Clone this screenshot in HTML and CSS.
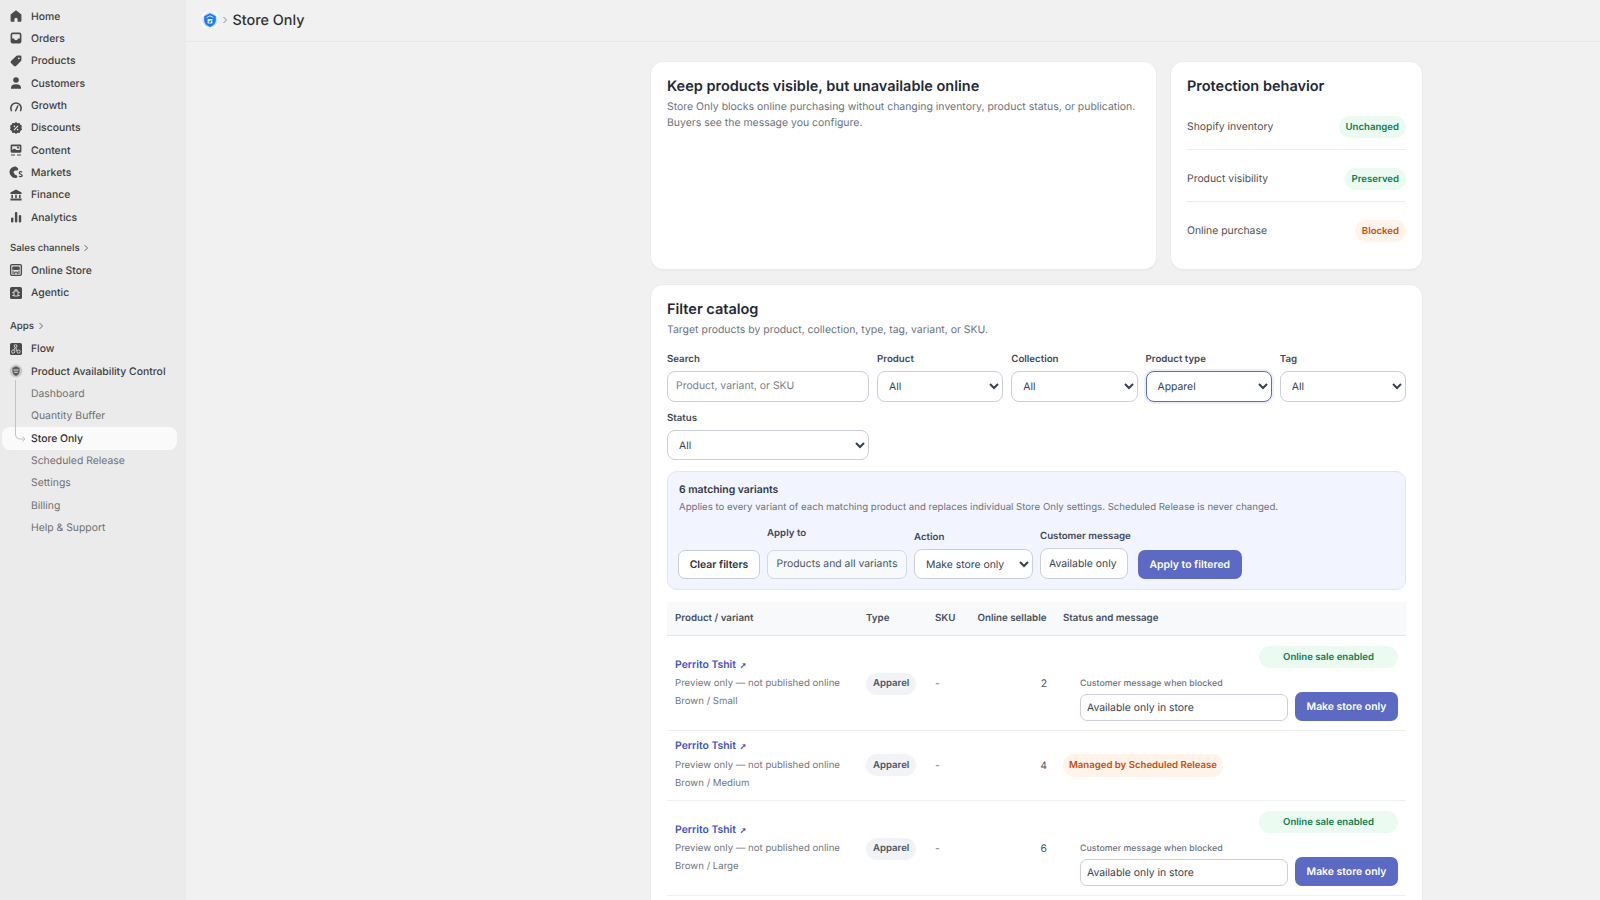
FILE: index.html
```html
<!DOCTYPE html>
<html lang="en">
<head>
<meta charset="utf-8">
<title>Store Only</title>
<link rel="stylesheet" href="styles.css">
</head>
<body>
<div class="app">
  <nav class="sidebar">
    <ul class="nav-list">
      <li class="nav-item"><svg class="ico" viewBox="0 0 16 16"><path d="M8 2.2 13.4 6.6V12.8A1 1 0 0 1 12.4 13.8H9.6V11.4A1.6 1.6 0 0 0 6.4 11.4V13.8H3.6A1 1 0 0 1 2.6 12.8V6.6Z"/></svg>Home</li>
      <li class="nav-item"><svg class="ico" viewBox="0 0 16 16"><path fill-rule="evenodd" d="M4.6 2.6H11.4A2 2 0 0 1 13.4 4.6V11.4A2 2 0 0 1 11.4 13.4H4.6A2 2 0 0 1 2.6 11.4V4.6A2 2 0 0 1 4.6 2.6ZM4.2 4.2V8.4H6.2A1.8 1.8 0 0 0 9.8 8.4H11.8V4.2Z"/></svg>Orders</li>
      <li class="nav-item"><svg class="ico" viewBox="0 0 16 16"><path fill-rule="evenodd" d="M9.2 2.6H12.4A1 1 0 0 1 13.4 3.6V7A1.2 1.2 0 0 1 13 7.9L8 13A1.5 1.5 0 0 1 6 13L3 10A1.5 1.5 0 0 1 3 8L8.3 3A1.2 1.2 0 0 1 9.2 2.6ZM10.8 4.4A.9.9 0 1 0 10.9 6.2.9.9 0 0 0 10.8 4.4Z"/></svg>Products</li>
      <li class="nav-item"><svg class="ico" viewBox="0 0 16 16"><circle cx="8" cy="5" r="2.8"/><path d="M3 13.8V12.6C3 10.4 5 9.2 8 9.2S13 10.4 13 12.6V13.8Z"/></svg>Customers</li>
      <li class="nav-item"><svg class="ico" viewBox="0 0 16 16"><path class="stk" d="M3.4 13.6A5.2 5.2 0 1 1 12.6 13.6M7.6 13.8 9.8 9"/></svg>Growth</li>
      <li class="nav-item"><svg class="ico" viewBox="0 0 16 16"><path d="M8 2 9.6 3.2 11.6 2.9 12.3 4.7 14 5.8 13.4 7.8 14 9.8 12.3 10.9 11.6 12.9 9.6 12.8 8 14 6.4 12.8 4.4 12.9 3.7 10.9 2 9.8 2.6 7.8 2 5.8 3.7 4.7 4.4 2.9 6.4 3.2Z"/><path class="cut" d="M6.2 9.8 9.8 6.2"/><circle class="dot" cx="6.4" cy="6.4" r=".8"/><circle class="dot" cx="9.6" cy="9.6" r=".8"/></svg>Discounts</li>
      <li class="nav-item"><svg class="ico" viewBox="0 0 16 16"><path fill-rule="evenodd" d="M4 2.6H12A1.4 1.4 0 0 1 13.4 4V9.4A1.4 1.4 0 0 1 12 10.8H4A1.4 1.4 0 0 1 2.6 9.4V4A1.4 1.4 0 0 1 4 2.6ZM4.2 4.2V8L6.4 6.6 8.4 8 11.8 8V4.2Z"/><circle cx="10" cy="5.6" r="1.1"/><path d="M3 12.4H7V13.6H3ZM9 12.4H13V13.6H9Z"/></svg>Content</li>
      <li class="nav-item"><svg class="ico" viewBox="0 0 16 16"><path d="M7.6 2.4A5.8 5.8 0 1 0 9.4 13.6L9 11.6 7 10.8 5.4 8 7 6.4 9.4 6.6 10.4 5A5.8 5.8 0 0 0 7.6 2.4Z"/><path class="sym" d="M14 8.4C13.4 7.4 11.2 7.4 11.2 8.9 11.2 10.4 14.2 10 14.2 11.6 14.2 13 11.8 13 11 12"/></svg>Markets</li>
      <li class="nav-item"><svg class="ico" viewBox="0 0 16 16"><path d="M8 2.4 13.6 5.4V7H2.4V5.4Z"/><path d="M3.4 7.8H5V11H3.4ZM7.2 7.8H8.8V11H7.2ZM11 7.8H12.6V11H11ZM2.4 11.6H13.6V13.6H2.4Z"/></svg>Finance</li>
      <li class="nav-item"><svg class="ico" viewBox="0 0 16 16"><rect x="3" y="8.4" width="2.4" height="5.2" rx="1"/><rect x="6.9" y="3" width="2.4" height="10.6" rx="1"/><rect x="10.8" y="6" width="2.4" height="7.6" rx="1"/></svg>Analytics</li>
    </ul>
    <div class="nav-heading nav-heading-sales">Sales channels <svg class="chev" viewBox="0 0 6 8"><path d="M1.5 1 4.5 4 1.5 7"/></svg></div>
    <ul class="nav-list">
      <li class="nav-item"><svg class="ico" viewBox="0 0 16 16"><rect class="box" x="2.6" y="2.6" width="10.8" height="10.8" rx="1.4"/><path d="M4.8 4.4H11.2L12 6.8C12 8 10.6 8.2 10 7.4 9.4 8.2 6.6 8.2 6 7.4 5.4 8.2 4 8 4 6.8Z"/><path class="thin" d="M5 8.6V12.2M11 8.6V12.2M6.6 12.2V10.2H9.4V12.2"/></svg>Online Store</li>
      <li class="nav-item"><svg class="ico" viewBox="0 0 16 16"><rect x="2" y="2" width="12" height="12" rx="1.6"/><path class="lt" d="M6 6H10V11H6ZM7.2 6V4M8.8 6V4M6 7.6H4.2M10 7.6H11.8M6 10.6H4.2M10 10.6H11.8"/></svg>Agentic</li>
    </ul>
    <div class="nav-heading nav-heading-apps">Apps <svg class="chev" viewBox="0 0 6 8"><path d="M1.5 1 4.5 4 1.5 7"/></svg></div>
    <ul class="nav-list">
      <li class="nav-item"><svg class="ico" viewBox="0 0 16 16"><rect x="2" y="2" width="12" height="12" rx="1.6"/><path class="lt" d="M7.4 6.4 5.8 9M8.2 6.6V9.2L9.4 9.8"/><circle class="lt" cx="7.6" cy="5" r="1.4"/><circle class="lt" cx="5.2" cy="10.6" r="1.6"/><circle class="lt" cx="10.6" cy="10.6" r="1.6"/></svg>Flow</li>
      <li class="nav-item nav-item-app"><svg class="ico" viewBox="0 0 16 16"><circle class="app-disc" cx="8" cy="8" r="6.4"/><path d="M8 3.2 11.6 5V8.6C11.6 10.8 10 12.2 8 13 6 12.2 4.4 10.8 4.4 8.6V5Z"/><path class="cut" d="M5.8 7H10.2M6.4 9.2H9.6"/></svg>Product Availability Control</li>
      <li class="nav-item nav-sub">Dashboard</li>
      <li class="nav-item nav-sub">Quantity Buffer</li>
      <li class="nav-item nav-sub nav-current">Store Only<svg class="tree" viewBox="0 0 15 62" aria-hidden="true"><path d="M.5 0V54Q.5 59 5.5 59H10M7.5 56.5 10 59 7.5 61.5"/></svg></li>
      <li class="nav-item nav-sub">Scheduled Release</li>
      <li class="nav-item nav-sub">Settings</li>
      <li class="nav-item nav-sub">Billing</li>
      <li class="nav-item nav-sub">Help &amp; Support</li>
    </ul>
  </nav>

  <div class="page">
    <header class="topbar">
      <span class="logo"><svg viewBox="0 0 16 16" class="logo-svg"><circle cx="8" cy="8" r="7.8" fill="#cfe3ff"/><path d="M8 1.2 13.8 4.2V8.6C13.8 11.6 11.2 13.8 8 15 4.8 13.8 2.2 11.6 2.2 8.6V4.2Z" fill="#1f78f2"/><path d="M4.6 5.6 8 3.8 11.4 5.6" fill="none" stroke="#d7e8ff" stroke-width="1"/><rect x="5.6" y="7" width="4.8" height="4.6" rx=".6" fill="#dff4ea"/><path d="M6.8 9.4 7.8 10.4 9.4 8.2" fill="none" stroke="#16a05a" stroke-width="1.1"/></svg></span>
      <svg class="crumb-sep" viewBox="0 0 6 8"><path d="M1.5 1 4.5 4 1.5 7"/></svg>
      <h1 class="page-title">Store Only</h1>
    </header>

    <main class="content">
      <div class="top-cards">
        <section class="card">
          <h2 class="card-title">Keep products visible, but unavailable online</h2>
          <p class="card-text">Store Only blocks online purchasing without changing inventory, product status, or publication. Buyers see the message you configure.</p>
        </section>
        <section class="card">
          <h2 class="card-title">Protection behavior</h2>
          <div class="behavior">
            <div class="behavior-row"><span class="behavior-name">Shopify inventory</span><span class="badge badge-green">Unchanged</span></div>
            <div class="behavior-row"><span class="behavior-name">Product visibility</span><span class="badge badge-green">Preserved</span></div>
            <div class="behavior-row behavior-last"><span class="behavior-name">Online purchase</span><span class="badge badge-orange">Blocked</span></div>
          </div>
        </section>
      </div>

      <section class="card card-catalog">
        <h2 class="card-title">Filter catalog</h2>
        <p class="card-text">Target products by product, collection, type, tag, variant, or SKU.</p>

        <div class="filters">
          <label class="field"><span class="field-label">Search</span><input class="control" type="text" placeholder="Product, variant, or SKU"></label>
          <label class="field"><span class="field-label">Product</span><select class="control"><option>All</option></select></label>
          <label class="field"><span class="field-label">Collection</span><select class="control"><option>All</option></select></label>
          <label class="field"><span class="field-label">Product type</span><select class="control control-focus"><option>Apparel</option></select></label>
          <label class="field"><span class="field-label">Tag</span><select class="control"><option>All</option></select></label>
          <label class="field"><span class="field-label">Status</span><select class="control control-short"><option>All</option></select></label>
        </div>

        <div class="bulk">
          <div class="bulk-title">6 matching variants</div>
          <div class="bulk-text">Applies to every variant of each matching product and replaces individual Store Only settings. Scheduled Release is never changed.</div>
          <div class="bulk-controls">
            <button class="btn btn-plain" type="button">Clear filters</button>
            <div class="bulk-field bulk-apply"><span class="field-label">Apply to</span><div class="static-box">Products and all variants</div></div>
            <label class="bulk-field bulk-action"><span class="field-label">Action</span><select class="control control-action"><option>Make store only</option></select></label>
            <label class="bulk-field bulk-message"><span class="field-label">Customer message</span><input class="control control-message" type="text" value="Available only"></label>
            <button class="btn btn-primary btn-apply" type="button">Apply to filtered</button>
          </div>
        </div>

        <table class="variants">
          <thead>
            <tr>
              <th class="col-product">Product / variant</th>
              <th class="col-type">Type</th>
              <th class="col-sku">SKU</th>
              <th class="col-qty">Online sellable</th>
              <th class="col-status">Status and message</th>
            </tr>
          </thead>
          <tbody>
            <tr class="row-tall">
              <td><a class="product-link" href="#">Perrito Tshit <span class="ext">➚</span></a><div class="meta">Preview only — not published online</div><div class="meta">Brown / Small</div></td>
              <td><span class="pill">Apparel</span></td>
              <td class="sku">-</td>
              <td class="qty">2</td>
              <td>
                <div class="status-stack">
                  <span class="badge badge-green badge-wide">Online sale enabled</span>
                  <div class="msg-form">
                    <label class="msg-field"><span class="msg-label">Customer message when blocked</span><input class="msg-input" type="text" value="Available only in store"></label>
                    <button class="btn btn-primary btn-make" type="button">Make store only</button>
                  </div>
                </div>
              </td>
            </tr>
            <tr class="row-short">
              <td><a class="product-link" href="#">Perrito Tshit <span class="ext">➚</span></a><div class="meta">Preview only — not published online</div><div class="meta">Brown / Medium</div></td>
              <td><span class="pill">Apparel</span></td>
              <td class="sku">-</td>
              <td class="qty">4</td>
              <td><span class="badge badge-orange badge-managed">Managed by Scheduled Release</span></td>
            </tr>
            <tr class="row-tall">
              <td><a class="product-link" href="#">Perrito Tshit <span class="ext">➚</span></a><div class="meta">Preview only — not published online</div><div class="meta">Brown / Large</div></td>
              <td><span class="pill">Apparel</span></td>
              <td class="sku">-</td>
              <td class="qty">6</td>
              <td>
                <div class="status-stack">
                  <span class="badge badge-green badge-wide">Online sale enabled</span>
                  <div class="msg-form">
                    <label class="msg-field"><span class="msg-label">Customer message when blocked</span><input class="msg-input" type="text" value="Available only in store"></label>
                    <button class="btn btn-primary btn-make" type="button">Make store only</button>
                  </div>
                </div>
              </td>
            </tr>
          </tbody>
        </table>
      </section>
    </main>
  </div>
</div>
</body>
</html>
```
FILE: styles.css
```css
* { box-sizing: border-box; }
html, body { margin: 0; height: 900px; overflow: hidden; }
body { font-family: Inter, "Liberation Sans", sans-serif; font-size: 10.4px; color: #303030; background: #f1f1f1; text-rendering: geometricPrecision; }
input, select, button { text-rendering: geometricPrecision; }
h1, h2, p, ul { margin: 0; padding: 0; }
ul { list-style: none; }

.app { display: flex; height: 900px; }

.sidebar { width: 186px; flex: none; background: #ebebeb; padding-top: 5px; }
.nav-item { position: relative; display: flex; align-items: center; height: 22.35px; padding-left: 31px; font-size: 10.4px; font-weight: 500; color: #3d3d3d; white-space: nowrap; }
.ico { position: absolute; left: 8px; top: 3px; width: 16px; height: 16px; fill: #4a4a4a; }
.stk { fill: none; stroke: #4a4a4a; stroke-width: 1.5; stroke-linecap: round; }
.cut { fill: none; stroke: #ebebeb; stroke-width: 1.1; stroke-linecap: round; }
.dot { fill: #ebebeb; }
.sym { fill: none; stroke: #4a4a4a; stroke-width: 1.2; }
.box { fill: #dcdcdc; stroke: #4a4a4a; stroke-width: 1.3; }
.thin { fill: none; stroke: #4a4a4a; stroke-width: 1; }
.lt { fill: none; stroke: #dedede; stroke-width: .9; }
.app-disc { fill: #c9c9c9; }
.nav-item-app .ico path { fill: #5a5a5a; }
.nav-item-app .ico .cut { fill: none; stroke: #d8d8d8; }
.nav-heading { display: flex; align-items: center; gap: 3.5px; height: 22.35px; padding-left: 10px; font-size: 9.7px; font-weight: 500; color: #3d3d3d; }
.nav-heading-sales { margin-top: 8.7px; }
.nav-heading-apps { margin-top: 11.1px; }
.chev { width: 6px; height: 8px; fill: none; stroke: #666; stroke-width: 1; }
.nav-sub { color: #707070; font-weight: 400; }
.nav-current { color: #303030; font-weight: 500; isolation: isolate; }
.nav-current::before { content: ""; position: absolute; left: 2px; right: 9px; top: 0; bottom: -1px; background: #fafafa; border-radius: 8px; z-index: -1; }
.tree { position: absolute; left: 15px; top: -47px; width: 15px; height: 62px; fill: none; stroke: #c2c2c2; stroke-width: 1; overflow: visible; }

.page { flex: 1; min-width: 0; }
.topbar { display: flex; align-items: center; height: 42px; padding: 0 0 1px 16px; border-bottom: 1px solid #e8e8e8; }
.logo { display: block; width: 16px; height: 16px; background: #fff; border-radius: 4px; }
.logo-svg { display: block; width: 16px; height: 16px; }
.crumb-sep { width: 6px; height: 8px; margin: 0 4.4px 0 4px; fill: none; stroke: #888; stroke-width: 1; }
.page-title { font-size: 14.4px; font-weight: 500; color: #303030; }

.content { width: 773px; margin-left: 464px; padding-top: 19px; }
.top-cards { display: grid; grid-template-columns: 507px 253px; gap: 13px; margin-bottom: 14px; }
.card { height: 209px; padding: 15px 16px 16px; background: #fff; border: 1px solid #ececec; border-radius: 13px; box-shadow: 0 1px 1px rgba(0, 0, 0, .03); }
.card-catalog { height: auto; padding-bottom: 16px; }
.card-title { font-size: 14.5px; line-height: 20px; font-weight: 600; color: #1f2937; }
.card-text { margin-top: 2px; font-size: 10.46px; line-height: 16px; color: #6b7280; }

.behavior { margin-top: 1px; }
.behavior-row { display: flex; justify-content: space-between; align-items: center; padding: 18px 0 11px; border-bottom: 1px solid #ececef; font-size: 10.4px; color: #4f4f4f; }
.behavior-name { margin-bottom: 2px; }
.behavior-last { border-bottom: 0; }

.badge { display: inline-flex; align-items: center; justify-content: center; height: 22px; padding: 0 7px; border-radius: 11px; font-size: 9.6px; font-weight: 600; white-space: nowrap; }
.badge-green { background: #ebfbf1; color: #0f7b4f; }
.badge-orange { background: #fff3ea; color: #c2500f; }
.badge-wide { width: 139px; }
.badge-managed { height: 23px; padding: 0 6px; }

.filters { display: grid; grid-template-columns: 1.6fr 1fr 1fr 1fr 1fr; gap: 10px 8px; margin-top: 15px; }
.field { display: flex; flex-direction: column; min-width: 0; }
.field-label { display: block; margin-bottom: 4px; font-size: 9.7px; line-height: 14px; font-weight: 600; color: #3f4757; white-space: nowrap; }
.control { width: 100%; height: 31px; padding: 0 8px; background: #fff; border: 1px solid #ccced8; border-radius: 8px; font-family: inherit; font-size: 10.4px; color: #374151; }
select.control { padding: 0 7px; }
input.control { padding-bottom: 2px; }
.control::placeholder { color: #7a7f8a; }
.control-short { height: 30px; }
.control-focus { border-color: #5c6ac4; box-shadow: 0 0 0 2px #eceefb; }

.bulk { margin-top: 11px; padding: 10px; background: #f2f5ff; border: 1px solid #dfe5fb; border-radius: 10px; }
.bulk-title { margin: 0 0 0 1px; font-size: 10.4px; line-height: 16px; font-weight: 600; color: #2f3745; }
.bulk-text { margin: 2px 0 0 1px; font-size: 9.65px; line-height: 16px; color: #6b7280; }
.bulk-controls { display: flex; align-items: flex-end; gap: 7px; margin-top: 11px; }
.bulk-field { display: flex; flex-direction: column; align-items: flex-start; }
.bulk-apply .field-label { margin-bottom: 9px; }
.bulk-action .field-label, .bulk-message .field-label { margin-bottom: 4.5px; }
.static-box { display: flex; align-items: center; justify-content: center; width: 140px; height: 29px; padding-bottom: 2px; background: #f8f9fb; border: 1px solid #d4d7e0; border-radius: 7px; font-size: 10.4px; color: #4b5563; }
.control-action { width: 119px; height: 30px; }
input.control-message { width: 88px; height: 31px; padding-bottom: 0; }

.btn { height: 29px; border-radius: 7px; font-family: inherit; font-size: 10.4px; font-weight: 600; white-space: nowrap; cursor: pointer; }
.btn-plain { width: 82px; padding: 0; background: #fff; border: 1px solid #c9ccd6; color: #2b3240; }
.btn-primary { padding: 0; background: #5c6ac4; border: 0; color: #fff; }
.btn-apply { width: 104px; }
.btn-make { width: 103px; }

.variants { width: 739px; margin-top: 12px; table-layout: fixed; border-collapse: collapse; }
.variants th { height: 33px; padding: 0 8px; background: #f8f9fb; border-bottom: 1px solid #e5e7eb; text-align: left; font-size: 9.75px; font-weight: 600; color: #485060; white-space: nowrap; }
.col-product { width: 191px; }
.col-type { width: 69px; }
.col-sku { width: 42.5px; }
.col-qty { width: 85.5px; }
.variants td { padding: 0 8px; border-bottom: 1px solid #eeeff2; vertical-align: middle; }
.row-tall td { height: 95.5px; padding-top: 2px; }
.row-short td { height: 69.5px; }
.row-short .product-link { margin-bottom: 1px; }
.product-link { display: block; line-height: 18.25px; font-size: 10.4px; font-weight: 600; color: #4052c6; text-decoration: none; }
.ext { font-size: 8px; margin-left: 1px; color: #4052c6; }
.meta { line-height: 18.25px; font-size: 9.65px; color: #6f7683; white-space: nowrap; }
.pill { display: inline-flex; align-items: center; height: 22px; padding: 0 7px; background: #f2f3f6; border-radius: 11px; font-size: 9.6px; font-weight: 600; color: #4b5563; }
.sku { color: #6b7280; font-size: 10.4px; }
.qty { text-align: right; font-size: 10.4px; color: #4b5563; }

.status-stack { display: flex; flex-direction: column; align-items: flex-end; }
.msg-form { display: flex; align-items: flex-end; gap: 7px; width: 318px; margin-top: 8.5px; }
.msg-field { display: block; flex: 1; }
.msg-label { display: block; margin-bottom: 4.5px; font-size: 8.8px; line-height: 13px; font-weight: 500; color: #6b7280; }
.msg-input { display: block; width: 100%; height: 27px; padding: 0 6px 1px; background: #fff; border: 1px solid #ccced8; border-radius: 7px; font-family: inherit; font-size: 10.4px; color: #374151; }
```
